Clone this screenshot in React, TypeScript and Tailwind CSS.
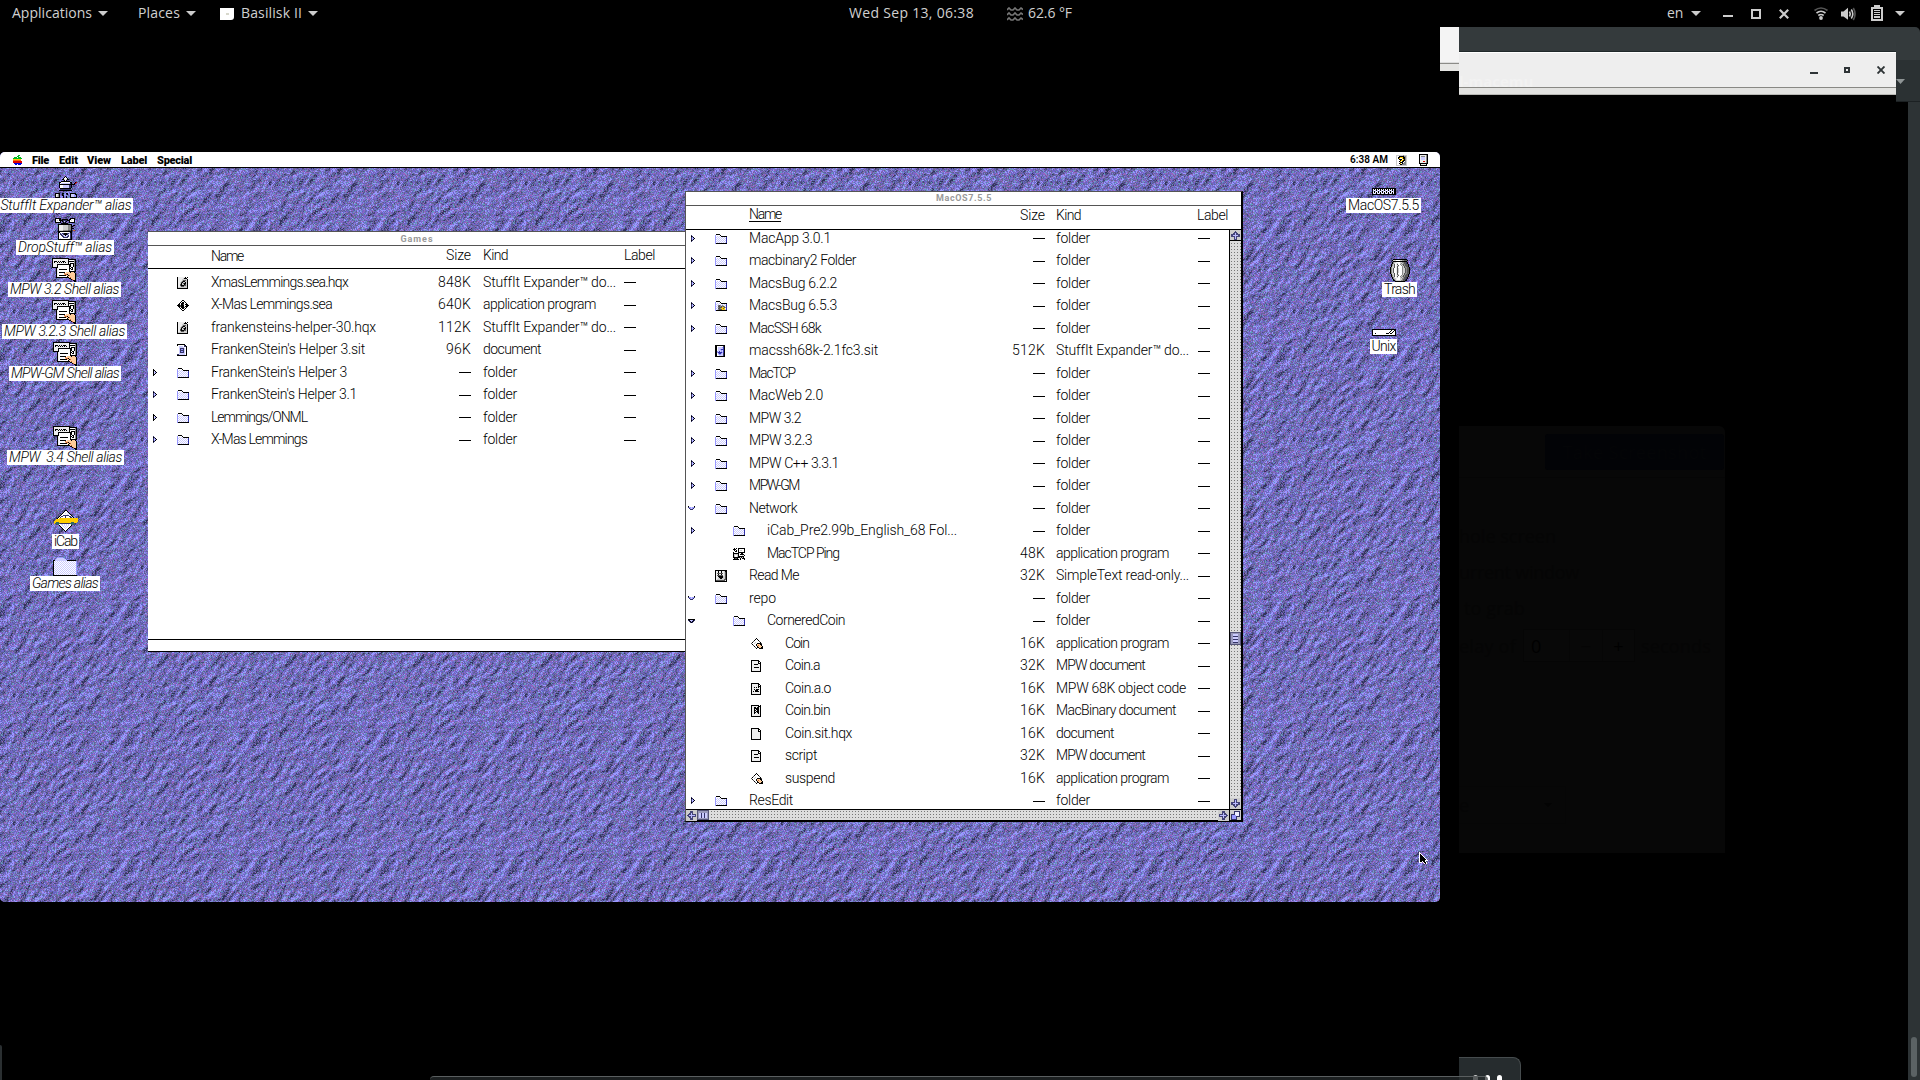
import { useLayoutEffect, useRef, useState } from "react";
import type { ReactNode } from "react";

/* ---------- pixel art ---------- */

const INK: Record<string, string> = {
  k: "#000000",
  w: "#ffffff",
  l: "#ccccff",
  v: "#9999ff",
  b: "#3333aa",
  n: "#333366",
  g: "#cccccc",
  e: "#eeeeee",
  d: "#888888",
  s: "#555555",
  o: "#ffcc99",
  h: "#cc6633",
  y: "#ffcc00",
  r: "#dd0000",
  G: "#00bb22",
  O: "#ff6600",
  B: "#0000dd",
  t: "#336666",
};

function Pixels({ rows, className }: { rows: string[]; className?: string }) {
  const w = Math.max(...rows.map((r) => r.length));
  const cells: ReactNode[] = [];
  rows.forEach((r, y) => {
    let x = 0;
    while (x < r.length) {
      const c = r[x];
      let n = 1;
      while (r[x + n] === c) n++;
      if (INK[c]) cells.push(<rect key={`${x}-${y}`} x={x} y={y} width={n} height={1} fill={INK[c]} />);
      x += n;
    }
  });
  return (
    <svg width={w} height={rows.length} viewBox={`0 0 ${w} ${rows.length}`} shapeRendering="crispEdges" className={className ?? "block shrink-0"}>
      {cells}
    </svg>
  );
}

const FOLDER = [
  ".kkkk.......",
  "vwwwwk......",
  "vwlwlwkkkkkk",
  "vlwlwlwlwlwb",
  "vwlwlwlwlwlb",
  "vlwlwlwlwlwb",
  "vwlwlwlwlwlb",
  "vlwlwlwlwlwb",
  "vwlwlwlwlwlb",
  "vkkkkkkkkkkk",
];
const FOLDER_BUG = [
  ".kkkk.......",
  "vwwwwk......",
  "vwlwlwkkkkkk",
  "vlwlwlwlwlwb",
  "vwldsdldgwlb",
  "vlwssdsdsdwb",
  "vwldsssyysdb",
  "vlwssdyysywb",
  "vwldsssyyylb",
  "vkkkkkkkkkkk",
];
const HQX = [
  "keeeeeeek.k",
  "keeeeegkkk.",
  "keeeegggggk",
  "keeeegsssgk",
  "keeegskkggk",
  "keegskggkgk",
  "keegkgskkgk",
  "keeskggksgk",
  "keeskkkssgk",
  "keegsssgggk",
  "kgggggggggk",
  "kkkkkkkkkkk",
];
const SEA = [
  ".....kk.....",
  "....kwwk....",
  "...kwkkwk...",
  "..kwkkkwwk..",
  ".kkwkkswkkk.",
  "kkkskkkwwkkk",
  ".kkskkkwkkk.",
  "..kwkkkswk..",
  "...kwkkwk...",
  "....kwwk....",
  ".....kk.....",
];
const SIT = [
  "kkkkkkkk..",
  "kwwwwwwnk.",
  ".wllllwnnk",
  ".wlllllwwk",
  ".wlnnnnlwk",
  ".wlnvvnlwk",
  ".wlnnnnlwk",
  ".wlnvvnlwk",
  ".wlnnnnlwk",
  ".wllllllwk",
  "nnllllllwk",
  "kkkkkkkkkk",
];
const SIT_DARK = [
  "kkkkkkkkkk",
  "kkwwwwwwnk",
  "kkwllllvbk",
  "kkwlllllbk",
  "kkwllvbbbk",
  "kkwlllvlbk",
  "kkvlblvlbk",
  "kkvbbbbvbk",
  "kkwvbbvlnk",
  "kkwlvvllnk",
  "kkwwllllnk",
  "kkkkkkkkkk",
];
const PING = [
  ".k.k.kkkkkkk",
  "kkk..kwwwwwk",
  ".k.k.kwggwwk",
  "..kk.kwwwwwk",
  "k....kkkkkkk",
  "kkkkkk..kk..",
  "kggggk.kkkk.",
  "kgwwgk...g.k",
  "kgwwgkkkkkk.",
  "kkkkkkkgkgk.",
  ".kssk..k.kkk",
  "kkkkkk.k...k",
];
const README = [
  "kkkkkkkkkkkk",
  "keekeekeegkk",
  "keekeekeegsk",
  "kessssssegsk",
  "keekeekeegsk",
  "kessssssegsk",
  "keekkkkkggsk",
  "keegkkkkggsk",
  "keeggkkgggsk",
  "kegggggggssk",
  "ksssssssssek",
  "kkkkkkkkkkkk",
];
const APP = [
  ".....k......",
  "....kwk.....",
  "...kwwwk....",
  "..swwwwws...",
  ".kwwgwwwwk..",
  "swwgwwkkkks.",
  ".kwwwkoookk.",
  "..swwkohook.",
  "...kwwkooook",
  "....swkkookk",
  ".....k..kkkk",
];
const DOC_HEAD = ["kkkkkkkk..", "keeeeeekk.", "keeeeeekwk", "keeeeeekkk"];
const DOC_LINES = [...DOC_HEAD, "keekkkkeek", "keeeeeeeek", "keeeeeeeek", "keekkkkkek", "keeeeeeeek", "keeeeeeeek", "keeeeeeeek", "kkkkkkkkkk"];
const DOC_OBJ = [...DOC_HEAD, "keekekekek", "keeeeeeeek", "keekekkkek", "keeekkkeek", "kekekkkkek", "keeeeeeeek", "keeeeeeeek", "kkkkkkkkkk"];
const DOC_BIN = ["kkkkkkkk.k", "keeeeeekkk", "keekkekkek", "keekkkkkek", "keekekkkek", "keekkekkek", "keekekkkek", "keekkekkek", "keekeeekek", "keeeeeeeek", "keeeeeeeek", "kkkkkkkkkk"];
const DOC_BLANK = [...DOC_HEAD, "keeeeeeeek", "keeeeeeeek", "keeeeeeeek", "keeeeeeeek", "keeeeeeeek", "keeeeeeeek", "keeeeeeeek", "kkkkkkkkkk"];

const TRI_RIGHT = ["k....", "kk...", "klk..", "klvk.", "klk..", "kk...", "k...."];
const TRI_SMALL = ["n...", "kn..", "nvk.", "nlvk", "nvk.", "kn..", "n..."];
const TRI_DOWN = ["k.....k", "nvvlvvn", ".nvlvn.", "..nnn.."];
const TRI_DOWN_WIDE = ["kkkkkkk", "nkllvkn", ".nkvkn.", "..nkn.."];

const MPW = [
  "kkkkkkkkkkkkkkkkk.......",
  "keeeeeeeeeeeeeeekkkkkkkk",
  "keeeeeeeeeeeeeeekwwwwwdk",
  "kekkkekekekkkeeekkkkkkdk",
  "kekeekekekekekeekeewwwdk",
  "keeeeeeeeeeeeeeekwkkkkdk",
  "keeeekkkkkkkkkkkkkkwwkdk",
  "keeeekwwwwwwwwwwwkkwwkdk",
  "keeeekwwwwwwwwwwwkkwwkdk",
  "kkkkkkwwwwwwwwwwwkwkkwdk",
  "....kewwwwwwwwwwwkkwkwdk",
  "....kewkkkkkkkkwwkwkkwdk",
  "....kewwwwwwwwwwwkwwwwdk",
  "....kewwwwwwwwwwwkkkkkkk",
  "....kewkkkkkkwooookoook.",
  "....kewwwwwwhooooooooook",
  "....kewwwwwwohhkoooooook",
  "....kewkkkkkkkookhoooook",
  "....kewwwwwwwwwkoooooook",
  "....kkkkkkkkkkkkkohooook",
  ".................kkooook",
  "...................khook",
  ".....................kkk",
  "......................kk",
];
const STUFFIT = [
  "..........k...........",
  ".........kwk..........",
  "........kwwwk.........",
  ".......kkgwgkk........",
  ".........kwk..........",
  "......kkkkkkkkk.......",
  "....kkwwwwwwwwwkk...kr",
  "....kwlllllllllnk..kr.",
  "....kkkkkkkkkkkkkkkk..",
  "....kwwwllllllnnk.....",
  "....kwwwllllllnnk.....",
  "....kwwwllllllnnk.....",
  ".....kkkkkkkkkkk......",
  ".....nnnnnnnnnnn......",
  "....kkkkkkkkkkkkk.....",
  "......................",
  "......................",
  "kkkkk..kk..kk..kkkkkk.",
  "keedk..kn..nk..klllvkk",
  "kegdk..kk......klllvvk",
  "kegdk...k..k...klllvvk",
  "kkkkk...k..k...kkkkkkk",
];
const DROPSTUFF = [
  "kkkkkk.........kkkkk",
  "kwwwkk.kkkkkk.kkwwwk",
  "kwgwkkkknnnnkkkwgwwk",
  "kwwwwk.knlnk..kwwwwk",
  "kkkkkk..knk...kkkkkk",
  "......kkkkkkk.......",
  "...kkkkkkkkkkkkkk...",
  "...keeeegggggdddk.kk",
  "...keeeegggggdddkk..",
  "...keeeegggggdddk...",
  "...keeeegggggdddkkk.",
  "...keeeegggggdddk...",
  "...kggggdddddsssk.hh",
  "...kkkkkkkkkkkkkk...",
  "...kkwwwwwwwwwlkk...",
  "...kwnlnnkkknnlnk...",
  "...kwnnlnkkknlwnk...",
  "...kwwnnllkllnwnk...",
  "...kwwwnnlllnnwnk...",
  "...kwwwwnnnnnwwnk...",
  "...kwlwwwwwwwwlnk...",
  "...kkkkkkkkkkkkkk...",
];
const ICAB = [
  "...........kk...........",
  "..........kwwk..........",
  ".........kwwwlk.........",
  "........kwwlwwlk........",
  ".......kwwwwwlwlk.......",
  "......kwwnnnnnnwwk......",
  ".....kwnnwwnwwwnnlk.....",
  "....kwnwwwwnwwwwnnlk....",
  "...kwyyyyyyyyyyyyyyyyyyy",
  "..yyyyyyyyyyyyyyyyyyyyyy",
  ".yyyyyyyyyyyyyyyyyyyyyyy",
  "yyyyyyyyyyyyyyyyyyyyyyyy",
  "yytttyyyyyyyyyyyytttyyy.",
  "ytttttnnnnnnnnnntttttn..",
  "..tttwwllwlwlwlwwttt....",
  ".....kwwlwlwlwlwwk......",
  "......kwwlwlwlwwk.......",
  ".......kwwlwlwwk........",
  "........kwwlwwk.........",
  ".........kwwwk..........",
  "..........kwk...........",
  "...........k............",
];
const BIG_FOLDER = [
  "....vvvvvv..............",
  "...vlllllll.............",
  "..vllllllllll...........",
  "kkllllllllllllkkkkkkkkk.",
  ...Array.from({ length: 14 }, (_, i) => (i % 2 ? "klwlwlwlwlwlwlwlwlwlwlwv" : "kwlwlwlwlwlwlwlwlwlwlwlv")),
  "kkkkkkkkkkkkkkkkkkkkkkkk",
];
const DISK = [
  "kkkkkkkkkkkkkkkkkkkkkkkk",
  "kwkwkwkwkwkwkwkwkwkwkwkk",
  "klwlklwlklwlklwlklwlklkk",
  "klklwlklwlklwlklwlklwlkk",
  "kwkwkwkwkwkwkwkwkwkwkwkk",
  "klwlklwlklwlklwlklwlklkk",
  "kkkkkkkkkkkkkkkkkkkkkkkk",
];
const UNIX = [
  "kkkkkkkkkkkkkkkkkkkkkkkk",
  "kwwwwwwwwwwwwwwwwwwkwwkk",
  "kwwwwwwwwwwwwwwwwwkwwkwk",
  "kwwwwwwwwwwwwwwwwkwwkwwk",
  "kwwkwwwwwwwwwwkkkwkkwwwk",
  "kwwwwwwwwwwwwwwwwwwwwwwk",
  "kkkkkkkkkkkkkkkkkkkkkkkk",
];
const TRASH = [
  "...kkkkkkkkkkkkkk...",
  "..kgggwwwwggddsssk..",
  "...kkkkkkkkkkkkkk...",
  "..kdggewwwggddssnk..",
  "..kdgwegwwgdgdssnk..",
  ".kdgsweswwdgdsdsssk.",
  ".kdgswegswwdgsdsssk.",
  ".kggswesgwwwdgsdssk.",
  "kdggsweswwwwdgsddssk",
  "kdgswwesgwwwdggsdssk",
  "kdgswwesgwwwdggsdssk",
  "kdgswwesgwwwdggsdssk",
  "kdgswwesgwwwdggsdssk",
  "kdgswwesgwwwdggsdssk",
  "kdggsweswwwwdgsddssk",
  ".kggswesgwwwdgsdssk.",
  ".kdgswegswwdgsdsssk.",
  ".kdgsweswwdgdsdsssk.",
  "..kdgwegwwgdgdssnk..",
  "..kdggewwwggddssnk..",
  "...kdgewwwggdssnk...",
  "...kkdgggggddsskk...",
  ".....kkkkkkkkkk.....",
];
const APPLE = [
  ".....GG..",
  "....GG...",
  ".GGG.GGG.",
  "GGGGGGGGG",
  "yyyyyyyy.",
  "OOOOOOOO.",
  "rrrrrrrrr",
  "rrrrrrrrr",
  ".BBBBBBBB",
  "..BB.BBB.",
];
const HELP = [
  "gggggggdggg",
  "gwwkkkkkddg",
  "gwkkyyykkdg",
  "gwkywwykkdg",
  "gwwkkkwykdg",
  "gwwwkyykkdg",
  "gwwkywkkwdg",
  "gwwwkkkwddg",
  "gwwkywkdddg",
  "gwwwkkddddg",
  "ggggggggggg",
];
const FINDER = [
  "kkkkkkkkk",
  "keeeeeedk",
  "keddddedk",
  "kelllledk",
  "kelllledk",
  "kelllledk",
  "keeeeeedk",
  "keeerredk",
  "keeeeeedk",
  "kkkkkkkkk",
  ".keeeeek.",
  ".kkkkkkk.",
];
const POINTER = [
  "w.........",
  "ww........",
  "wkw.......",
  "wkkw......",
  "wkkkw.....",
  "wkkkkw....",
  "wkkkkkw...",
  "wkkkkkkw..",
  "wkkkkkwww.",
  "wkkwkkw...",
  "www.wkkw..",
  ".....wkw..",
];

/* ---------- desktop pattern ---------- */

const TILE = 128;
const SHADES = ["#33335c", "#48487c", "#5c5c94", "#666699", "#6666c4", "#7c66c8", "#8585dd", "#9999ff", "#6699bb", "#9966bb"];

function hash(x: number, y: number, s: number) {
  let h = (x * 374761393 + y * 668265263 + s * 974634777) | 0;
  h = Math.imul(h ^ (h >>> 13), 1274126177);
  return ((h ^ (h >>> 16)) >>> 0) / 4294967295;
}

function noise(u: number, v: number, nu: number, nv: number, s: number) {
  const iu = Math.floor(u);
  const iv = Math.floor(v);
  const fu = u - iu;
  const fv = v - iv;
  const a = fu * fu * (3 - 2 * fu);
  const b = fv * fv * (3 - 2 * fv);
  const at = (i: number, j: number) => hash(((i % nu) + nu) % nu, ((j % nv) + nv) % nv, s);
  return (at(iu, iv) * (1 - a) + at(iu + 1, iv) * a) * (1 - b) + (at(iu, iv + 1) * (1 - a) + at(iu + 1, iv + 1) * a) * b;
}

function buildTile() {
  const height = (x: number, y: number) => {
    const p = (x + y) / TILE;
    const r = (x + 2 * y) / TILE;
    const q = x / TILE;
    return 0.75 * noise(p * 22, q * 17, 22, 17, 1) + 0.75 * noise(r * 14, q * 19, 14, 19, 3) + 0.4 * noise(q * 34, (y / TILE) * 34, 34, 34, 2);
  };
  const paths = SHADES.map(() => "");
  for (let y = 0; y < TILE; y++) {
    for (let x = 0; x < TILE; x++) {
      const slope = height(x + 1, y + 1) - height(x - 0.5, y - 0.5);
      const level = 4.1 + slope * 6 + (hash(x, y, 9) - 0.5) * 5;
      let i = Math.max(0, Math.min(7, Math.round(level)));
      const tint = hash(x, y, 17);
      if (i > 1 && tint < 0.07) i = 8;
      else if (i > 1 && tint > 0.92) i = 9;
      paths[i] += `M${x} ${y}h1v1h-1z`;
    }
  }
  return paths;
}

const TILE_PATHS = buildTile();

function Backdrop() {
  return (
    <svg width="1440" height="750" className="absolute inset-0" shapeRendering="crispEdges">
      <defs>
        <pattern id="stone" width={TILE} height={TILE} patternUnits="userSpaceOnUse">
          {TILE_PATHS.map((d, i) => (
            <path key={i} d={d} fill={SHADES[i]} />
          ))}
        </pattern>
      </defs>
      <rect width="1440" height="750" fill="url(#stone)" />
    </svg>
  );
}

/* ---------- text ---------- */

/* Spreads its letters so that the line is w pixels wide. */
function Fit({ w, children, className = "" }: { w: number; children: string; className?: string }) {
  const ref = useRef<HTMLSpanElement>(null);
  const [gap, setGap] = useState(0);
  useLayoutEffect(() => {
    if (ref.current) setGap((w - ref.current.getBoundingClientRect().width) / children.length);
  }, [w, children]);
  return (
    <span ref={ref} className={`inline-block whitespace-pre ${className}`} style={{ letterSpacing: `${gap}px` }}>
      {children}
    </span>
  );
}

/* ---------- finder windows ---------- */

type Row = {
  name: string;
  w: number;
  icon: string[];
  tri?: string[];
  level?: number;
  size?: string;
  kind?: string;
};

const KIND_W: Record<string, number> = {
  folder: 34,
  document: 58,
  "application program": 113,
  "StuffIt Expander™ do...": 133,
  "SimpleText read-only...": 133,
  "MPW document": 89,
  "MPW 68K object code": 130,
  "MacBinary document": 120,
};

const GAMES: Row[] = [
  { name: "XmasLemmings.sea.hqx", w: 137, icon: HQX, size: "848K", kind: "StuffIt Expander™ do..." },
  { name: "X-Mas Lemmings.sea", w: 121, icon: SEA, size: "640K", kind: "application program" },
  { name: "frankensteins-helper-30.hqx", w: 165, icon: HQX, size: "112K", kind: "StuffIt Expander™ do..." },
  { name: "FrankenStein's Helper 3.sit", w: 154, icon: SIT, size: "96K", kind: "document" },
  { name: "FrankenStein's Helper 3", w: 136, icon: FOLDER, tri: TRI_RIGHT },
  { name: "FrankenStein's Helper 3.1", w: 146, icon: FOLDER, tri: TRI_SMALL },
  { name: "Lemmings/ONML", w: 96, icon: FOLDER, tri: TRI_RIGHT },
  { name: "X-Mas Lemmings", w: 96, icon: FOLDER, tri: TRI_SMALL },
];

const DISK_ROWS: Row[] = [
  { name: "MacApp 3.0.1", w: 82, icon: FOLDER, tri: TRI_SMALL },
  { name: "macbinary2 Folder", w: 107, icon: FOLDER, tri: TRI_SMALL },
  { name: "MacsBug 6.2.2", w: 88, icon: FOLDER, tri: TRI_SMALL },
  { name: "MacsBug 6.5.3", w: 88, icon: FOLDER_BUG, tri: TRI_SMALL },
  { name: "MacSSH 68k", w: 72, icon: FOLDER, tri: TRI_SMALL },
  { name: "macssh68k-2.1fc3.sit", w: 129, icon: SIT_DARK, size: "512K", kind: "StuffIt Expander™ do..." },
  { name: "MacTCP", w: 46, icon: FOLDER, tri: TRI_SMALL },
  { name: "MacWeb 2.0", w: 74, icon: FOLDER, tri: TRI_SMALL },
  { name: "MPW 3.2", w: 52, icon: FOLDER, tri: TRI_SMALL },
  { name: "MPW 3.2.3", w: 63, icon: FOLDER, tri: TRI_SMALL },
  { name: "MPW C++ 3.3.1", w: 90, icon: FOLDER, tri: TRI_SMALL },
  { name: "MPW-GM", w: 50, icon: FOLDER, tri: TRI_SMALL },
  { name: "Network", w: 48, icon: FOLDER, tri: TRI_DOWN },
  { name: "iCab_Pre2.99b_English_68 Fol...", w: 190, icon: FOLDER, tri: TRI_SMALL, level: 1 },
  { name: "MacTCP Ping", w: 72, icon: PING, level: 1, size: "48K", kind: "application program" },
  { name: "Read Me", w: 50, icon: README, size: "32K", kind: "SimpleText read-only..." },
  { name: "repo", w: 27, icon: FOLDER, tri: TRI_DOWN },
  { name: "CorneredCoin", w: 78, icon: FOLDER, tri: TRI_DOWN_WIDE, level: 1 },
  { name: "Coin", w: 24, icon: APP, level: 2, size: "16K", kind: "application program" },
  { name: "Coin.a", w: 35, icon: DOC_LINES, level: 2, size: "32K", kind: "MPW document" },
  { name: "Coin.a.o", w: 46, icon: DOC_OBJ, level: 2, size: "16K", kind: "MPW 68K object code" },
  { name: "Coin.bin", w: 45, icon: DOC_BIN, level: 2, size: "16K", kind: "MacBinary document" },
  { name: "Coin.sit.hqx", w: 67, icon: DOC_BLANK, level: 2, size: "16K", kind: "document" },
  { name: "script", w: 32, icon: DOC_LINES, level: 2, size: "32K", kind: "MPW document" },
  { name: "suspend", w: 50, icon: APP, level: 2, size: "16K", kind: "application program" },
  { name: "ResEdit", w: 44, icon: FOLDER, tri: TRI_SMALL },
];

const INDENT = ["w-0", "w-[18px]", "w-[36px]"];

function Dash() {
  return <span className="mt-px block h-px w-3 bg-black" />;
}

function FileRow({ row, games }: { row: Row; games?: boolean }) {
  const kind = row.kind ?? "folder";
  const open = row.tri === TRI_DOWN || row.tri === TRI_DOWN_WIDE;
  return (
    <div className="flex h-[22.5px] shrink-0 items-center">
      <div className={open ? "flex w-[29px] pl-[2px]" : "flex w-[29px] pl-[5px]"}>{row.tri && <Pixels rows={row.tri} />}</div>
      <div className={INDENT[row.level ?? 0]} />
      <div className="flex w-[34px] pt-px">
        <Pixels rows={row.icon} />
      </div>
      <div className="flex-1">
        <Fit w={row.w}>{row.name}</Fit>
      </div>
      <div className="flex w-10 justify-end">{row.size ? <Fit w={row.size.length > 3 ? 33 : 25}>{row.size}</Fit> : <Dash />}</div>
      <div className={games ? "w-[153px] pl-3" : "w-[152px] pl-[11px]"}>
        <Fit w={KIND_W[kind]}>{kind}</Fit>
      </div>
      <div className={games ? "w-[61px]" : "w-[32px] pl-px"}>
        <Dash />
      </div>
    </div>
  );
}

function HeaderRow({ games }: { games?: boolean }) {
  return (
    <div className={games ? "flex h-[23px] items-center border-b border-black pb-[3px]" : "flex h-[24px] shrink-0 items-center border-b border-black pb-[5px]"}>
      <div className="w-[63px]" />
      <div className="flex flex-1 items-center">
        <Fit w={32} className={games ? "leading-[14px]" : "border-b border-black leading-[13px]"}>
          Name
        </Fit>
      </div>
      <div className="w-10 text-right">
        <Fit w={25}>Size</Fit>
      </div>
      <div className={games ? "w-[153px] pl-3" : "w-[152px] pl-[11px]"}>
        <Fit w={25}>Kind</Fit>
      </div>
      <div className={games ? "w-[61px]" : "w-[44px]"}>
        <Fit w={31}>Label</Fit>
      </div>
    </div>
  );
}

function Arrow({ className }: { className: string }) {
  return (
    <div className={`flex h-[11px] w-[11px] shrink-0 items-center justify-center bg-[#cccccc] ${className}`}>
      <svg width="9" height="9" viewBox="0 0 9 9" shapeRendering="crispEdges">
        <path d="M4 0h1v1h1v1h1v1h2v3H6v3H3V6H0V3h2V2h1V1h1z" fill="#444477" />
        <path d="M4 2h1v2h2v1H5v3H4V5H2V4h2z" fill="#bbbbff" />
      </svg>
    </div>
  );
}

function GamesWindow() {
  return (
    <div className="absolute left-[148px] top-[79px] flex h-[421px] w-[537px] flex-col border-b border-black border-t border-t-[#555] bg-white">
      <div className="flex h-[14px] items-center justify-center border-b border-[#555] pl-px pt-px">
        <Fit w={33} className="text-[9px] font-bold leading-none text-[#999]">
          Games
        </Fit>
      </div>
      <HeaderRow games />
      <div className="flex flex-1 flex-col pt-[2px]">
        {GAMES.map((r) => (
          <FileRow key={r.name} row={r} games />
        ))}
      </div>
      <div className="h-[12px] border-t border-black" />
    </div>
  );
}

function DiskWindow() {
  return (
    <div className="absolute left-[685px] top-[39px] flex h-[631px] w-[558px] flex-col border border-r-2 border-[#555] border-b-2 border-b-black border-r-black bg-white">
      <div className="flex h-[14px] shrink-0 items-center justify-center border-b border-[#555]">
        <Fit w={56} className="ml-px text-[9px] font-bold leading-none text-[#999]">
          MacOS7.5.5
        </Fit>
      </div>
      <HeaderRow />
      <div className="flex min-h-0 flex-1">
        <div className="-mt-[3px] flex flex-1 flex-col">
          {DISK_ROWS.map((r) => (
            <FileRow key={r.name} row={r} />
          ))}
        </div>
        <div className="flex w-3 flex-col border-l border-black bg-[#dddddd] bg-[radial-gradient(#777_0.7px,transparent_0.8px)] bg-[length:3px_3px]">
          <Arrow className="border-b border-black" />
          <div className="mt-[391px] flex h-[13px] w-[11px] shrink-0 items-center justify-center border border-[#555577] bg-[#9999bb]">
            <div className="h-[9px] w-[5px] bg-[repeating-linear-gradient(#ccccff_0_2px,#333366_2px_3px)]" />
          </div>
          <div className="flex-1" />
          <Arrow className="rotate-180" />
        </div>
      </div>
      <div className="flex h-[11px] shrink-0 border-t border-black bg-[#dddddd] bg-[radial-gradient(#777_0.7px,transparent_0.8px)] bg-[length:3px_3px]">
        <Arrow className="h-[10px] -rotate-90" />
        <div className="flex h-[10px] w-[12px] items-center justify-center border border-[#555577] bg-[#9999bb]">
          <div className="h-[5px] w-[8px] bg-[repeating-linear-gradient(90deg,#ccccff_0_2px,#333366_2px_3px)]" />
        </div>
        <div className="flex-1" />
        <Arrow className="h-[10px] rotate-90" />
        <div className="flex w-[12px] items-center justify-center border-l border-black bg-[#cccccc]">
          <svg width="9" height="9" viewBox="0 0 9 9" shapeRendering="crispEdges">
            <path d="M3 0h6v6H3zM0 3h6v6H0z" fill="#333366" />
            <path d="M4 1h4v4H4z" fill="#eeeeff" />
            <path d="M1 4h4v4H1z" fill="#9999ff" />
          </svg>
        </div>
      </div>
    </div>
  );
}

/* ---------- desktop icons ---------- */

function DeskIcon({ icon, label, w, place, box, alias }: { icon: string[]; label: string; w: number; place: string; box: string; alias?: boolean }) {
  return (
    <div className={`absolute flex flex-col items-center justify-end ${place}`}>
      <Pixels rows={icon} className={alias ? "mr-px block shrink-0" : "block shrink-0"} />
      <div className={`flex h-[15px] shrink-0 items-center justify-center bg-white ${box} ${alias ? "italic" : ""}`}>
        <Fit w={w}>{label}</Fit>
      </div>
    </div>
  );
}

function MacScreen() {
  return (
    <div className="absolute left-0 top-[152px] h-[750px] w-[1440px] overflow-hidden rounded-[5px] bg-[#7470c4] font-[Roboto,sans-serif] text-[14px] font-light leading-[15px] text-black">
      <Backdrop />
      <div className="relative flex h-4 items-center border-b border-black bg-white pl-[13px] pr-3 pt-px text-[11px] font-black leading-none">
        <Pixels rows={APPLE} />
        <Fit w={17} className="ml-[10px]">File</Fit>
        <Fit w={19} className="ml-[10px]">Edit</Fit>
        <Fit w={24} className="ml-[9px]">View</Fit>
        <Fit w={26} className="ml-[10px]">Label</Fit>
        <Fit w={35} className="ml-[10px]">Special</Fit>
        <div className="flex-1" />
        <Fit w={38} className="text-[10px] font-semibold">6:38 AM</Fit>
        <Pixels rows={HELP} className="ml-2" />
        <Pixels rows={FINDER} className="ml-3" />
      </div>

      <DeskIcon icon={STUFFIT} label="StuffIt Expander™ alias" w={131} alias place="left-0 top-[22px] h-[39px] w-[132px]" box="w-[133px]" />
      <DeskIcon icon={DROPSTUFF} label="DropStuff™ alias" w={94} alias place="left-[16px] top-[64px] h-[39px] w-[98px]" box="w-[98px]" />
      <DeskIcon icon={MPW} label="MPW 3.2 Shell alias" w={109} alias place="left-[8px] top-[106px] h-[39px] w-[113px]" box="w-[113px]" />
      <DeskIcon icon={MPW} label="MPW 3.2.3 Shell alias" w={121} alias place="left-[2px] top-[148px] h-[39px] w-[125px]" box="w-[125px]" />
      <DeskIcon icon={MPW} label="MPW-GM Shell alias" w={108} alias place="left-[9px] top-[190px] h-[39px] w-[112px]" box="w-[112px]" />
      <DeskIcon icon={MPW} label="MPW  3.4 Shell alias" w={113} alias place="left-[7px] top-[274px] h-[39px] w-[117px]" box="w-[117px]" />
      <DeskIcon icon={ICAB} label="iCab" w={23} place="left-[52px] top-[358px] h-[39px] w-[27px]" box="w-[27px] mt-[2px]" />
      <DeskIcon icon={BIG_FOLDER} label="Games alias" w={66} alias place="left-[30px] top-[400px] h-[39px] w-[70px]" box="w-[70px]" />

      <DeskIcon icon={DISK} label="MacOS7.5.5" w={71} place="left-[1346px] top-[22px] h-[39px] w-[75px]" box="w-[75px] mt-[3px]" />
      <DeskIcon icon={TRASH} label="Trash" w={31} place="left-[1382px] top-[106px] h-[39px] w-[35px]" box="w-[35px]" />
      <DeskIcon icon={UNIX} label="Unix" w={24} place="left-[1370px] top-[163px] h-[39px] w-[27px]" box="w-[27px] mt-[3px]" />

      <GamesWindow />
      <DiskWindow />
      <Pixels rows={POINTER} className="absolute left-[1419px] top-[700px]" />
    </div>
  );
}

/* ---------- host desktop ---------- */

function Caret({ className = "" }: { className?: string }) {
  return (
    <svg width="10" height="5" viewBox="0 0 10 5" className={className}>
      <path d="M0 0h10L5 5z" fill="#cccccc" />
    </svg>
  );
}

function TopBar() {
  return (
    <div className="absolute inset-x-0 top-0 flex h-[27px] items-center bg-black pb-px font-['Open_Sans',sans-serif] text-[14px] font-medium leading-none text-[#d0d0d0]">
      <div className="flex flex-1 items-center pl-3">
        <Fit w={80}>Applications</Fit>
        <Caret className="ml-[6px]" />
        <Fit w={42} className="ml-[30px]">Places</Fit>
        <Caret className="ml-[6px]" />
        <div className="relative ml-[24px] mt-[2px] h-3 w-[14px] rounded-br-[3px] bg-white">
          <div className="absolute left-[6px] top-[5px] h-[2px] w-[3px] bg-[#d8d8cc]" />
        </div>
        <Fit w={61} className="ml-[7px]">Basilisk II</Fit>
        <Caret className="ml-[6px]" />
      </div>
      <div className="flex items-center pl-[4px]">
        <Fit w={125}>Wed Sep 13, 06:38</Fit>
        <svg width="16" height="14" viewBox="0 0 16 14" className="ml-[33px] mt-px" fill="none" stroke="#777777" strokeWidth="1.6">
          <path d="M0 3l2-2 2 2 2 0 2-2 2 2 2 0 2-2 2 1.500M0 8l2-2 2 2 2 0 2-2 2 2 2 0 2-2 2 1.500M0 13l2-2 2 2 2 0 2-2 2 2 2 0 2-2 2 1.500" />
        </svg>
        <Fit w={44} className="ml-[5px]">62.6 °F</Fit>
      </div>
      <div className="flex flex-1 items-center justify-end pr-[15px]">
        <Fit w={16}>en</Fit>
        <Caret className="ml-2" />
        <div className="ml-[22px] mt-[6px] h-[2px] w-[10px] bg-[#cccccc]" />
        <div className="ml-[18px] mt-px h-[10px] w-[10px] border-2 border-[#cccccc]" />
        <svg width="10" height="10" viewBox="0 0 10 10" className="ml-[18px] mt-px" stroke="#cccccc" strokeWidth="2.2">
          <path d="M.8.8l8.400 8.400M9.200.8L.8 9.200" />
        </svg>
        <svg width="14" height="13" viewBox="0 0 14 13" className="ml-[25px] mt-px" fill="none" strokeWidth="1.600">
          <path d="M.5 3.500Q7-1.500 13.500 3.500" stroke="#555555" />
          <path d="M2.500 6Q7 2.500 11.500 6" stroke="#cccccc" />
          <path d="M4.300 8.500Q7 6.500 9.700 8.500" stroke="#cccccc" />
          <circle cx="7" cy="11" r="1.900" fill="#cccccc" />
        </svg>
        <svg width="15" height="14" viewBox="0 0 15 14" className="ml-[13px] mt-px" fill="none" strokeWidth="1.600">
          <path d="M0 4.500h2.500L7 .8v12L2.500 9.500H0z" fill="#cccccc" />
          <path d="M8.500 4.500q1.500 2.500 0 5M10.300 2.500q3 4.500 0 9" stroke="#cccccc" />
          <path d="M12.300 1q3.500 6 0 12" stroke="#555555" />
        </svg>
        <svg width="12" height="16" viewBox="0 0 12 16" className="ml-[15px]" shapeRendering="crispEdges">
          <path d="M3 0h6v2h3v14H0V2h3z" fill="#cccccc" />
          <path d="M2 4h8v10H2z" fill="#000000" />
          <path d="M3 5h6v1H3zM3 7h6v1H3zM3 9h6v1H3zM3 11h6v2H3z" fill="#cccccc" />
        </svg>
        <Caret className="ml-3" />
      </div>
    </div>
  );
}

function HiddenWindows() {
  return (
    <>
      <div className="absolute left-[1440px] top-[27px] flex h-[44px] w-[19px] flex-col bg-[#f4f4f4]">
        <div className="h-[36px] border-b border-[#dddddd]" />
        <div className="flex-1 border-t border-[#8c8c88] bg-[#e6e6e4]" />
      </div>

      <div className="absolute left-[1459px] top-[27px] h-[25px] w-[461px] rounded-tr-[5px] border-b border-[#20282a] bg-[#343a3c]" />
      <div className="absolute left-[1896px] top-[51px] h-[51px] w-6 bg-[#343a3c]">
        <div className="mt-[9px] h-[42px] border-b border-[#1c2123] bg-[#2b3133] pt-[19px]">
          <svg width="9" height="5" viewBox="0 0 9 5" className="block">
            <path d="M0 0h9L4.500 5z" fill="#8f9596" />
          </svg>
        </div>
      </div>
      <div className="absolute bottom-0 left-[1908px] top-[102px] w-3 bg-[#2d3335] pl-[3px]">
        <div className="mt-[935px] h-10 w-[6px] rounded-full bg-[#5b6264]" />
      </div>

      <div className="absolute left-[1459px] top-[52px] flex h-[43px] w-[437px] flex-col border-t border-white bg-[#eeeeee]">
        <div className="flex h-[34px] items-center justify-end pr-[11px]">
          <div className="mt-[22px] flex-1 font-['Open_Sans',sans-serif] text-[15px] font-bold leading-[12px] text-[#f2f2f2]">l-macemu</div>
          <div className="mt-[5px] h-[2px] w-2 bg-[#2e3436]" />
          <div className="ml-[26px] h-[6px] w-[6px] border-2 border-[#2e3436]" />
          <svg width="8" height="8" viewBox="0 0 8 8" className="ml-[27px]" stroke="#2e3436" strokeWidth="1.900">
            <path d="M.5.5l7 7M7.500.5l-7 7" />
          </svg>
        </div>
        <div className="flex-1 border-b border-t border-b-[#b8b8b4] border-t-[#888884] bg-[#e2e2e0]" />
      </div>
    </>
  );
}

function GhostDialog() {
  return (
    <div className="absolute left-[1459px] top-[426px] flex h-[427px] w-[266px] flex-col rounded-tr-[6px] bg-[#070707] font-['Open_Sans',sans-serif] text-[18px] leading-none text-[#050505]">
      <div className="flex h-[52px] items-center justify-end border-b border-[#050505] pr-px">
        <div className="flex h-[36px] w-[179px] items-center justify-center rounded-[3px] bg-[#020306] text-[#040507]">
          <Fit w={144}>Take Screenshot</Fit>
        </div>
      </div>
      <div className="mt-[49px]"><Fit w={97}>hole screen</Fit></div>
      <div className="mt-[18px]"><Fit w={120}>urrent window</Fit></div>
      <div className="mt-[18px] pl-[5px]"><Fit w={61}>to grab</Fit></div>
      <div className="mt-[12px] flex h-[33px] items-center">
        <Fit w={57}>elay of</Fit>
        <div className="ml-[7px] flex h-[33px] w-[112px] items-center border border-[#050505] bg-[#080808]">
          <span className="w-[46px] pl-[7px] text-black">0</span>
          <span className="h-full w-[33px] border-l border-[#060606] pt-[7px] text-center">−</span>
          <span className="h-full w-[33px] border-l border-[#060606] pt-[7px] text-center text-black">+</span>
        </div>
        <Fit w={70} className="ml-[6px]">seconds</Fit>
      </div>
      <div className="mt-[124px] flex h-[38px] w-[107px] items-center justify-between border border-l-0 border-[#060606] bg-[#070707] pr-[13px]">
        <span>e</span>
        <svg width="8" height="4" viewBox="0 0 8 4">
          <path d="M0 0h8L4 4z" fill="#030303" />
        </svg>
      </div>
    </div>
  );
}

function BottomEdge() {
  return (
    <>
      <div className="absolute left-0 top-[1045px] h-[35px] w-[2px] rounded-tr-[2px] bg-[#2a2f31]" />
      <div className="absolute left-[1459px] top-[1057px] flex h-[23px] w-[62px] items-end rounded-tr-[8px] border-r border-t border-[#464c4e] bg-[#262c2e]">
        <div className="flex gap-[7px] pl-[14px]">
          <div className="h-[5px] w-[5px] rounded-t-full bg-[#cccccc]" />
          <div className="h-[5px] w-[5px] rounded-t-full bg-white" />
          <div className="h-[5px] w-[5px] rounded-t-full bg-white" />
        </div>
      </div>
      <div className="absolute left-[430px] top-[1076px] h-[4px] w-[1058px] rounded-t-[4px] border-t border-[#5a5f60] bg-[#262c2e]/70" />
    </>
  );
}

export default function App() {
  return (
    <div className="relative h-[1080px] w-[1920px] overflow-hidden bg-black">
      <TopBar />
      <HiddenWindows />
      <GhostDialog />
      <BottomEdge />
      <MacScreen />
    </div>
  );
}
